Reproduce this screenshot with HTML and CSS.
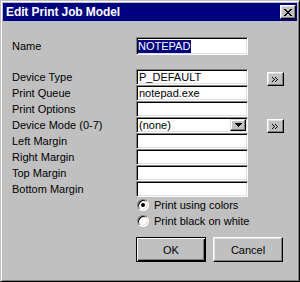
FILE: index.html
```html
<!DOCTYPE html>
<html>
<head>
<meta charset="utf-8">
<link rel="stylesheet" href="styles.css">
</head>
<body>
<div class="window">
  <div class="titlebar">
    <span class="title">Edit Print Job Model</span>
    <span class="close"><svg width="8" height="7" viewBox="0 0 8 7"><path d="M0 0h2v1h1v1h2V1h1V0h2v1H7v1H6v1H5v1h1v1h1v1h1v1H6V6H5V5H3v1H2v1H0V6h1V5h1V4h1V3H2V2H1V1H0z" fill="#000"/></svg></span>
  </div>
  <div class="form">
    <div class="row name-row">
      <span class="lbl">Name</span>
      <span class="field name-field"><span class="sel">NOTEPAD</span></span>
    </div>
    <div class="row">
      <span class="lbl">Device Type</span>
      <span class="field">P_DEFAULT</span>
      <span class="more more-a"><svg width="6" height="5" viewBox="0 0 6 5"><path d="M0 0h1v1h1v1h1v1H2v1H1v1H0V4h1V3h1V2H1V1H0zM3 0h1v1h1v1h1v1H5v1H4v1H3V4h1V3h1V2H4V1H3z" fill="#000"/></svg></span>
    </div>
    <div class="row">
      <span class="lbl">Print Queue</span>
      <span class="field">notepad.exe</span>
    </div>
    <div class="row">
      <span class="lbl">Print Options</span>
      <span class="field"></span>
    </div>
    <div class="row">
      <span class="lbl">Device Mode (0-7)</span>
      <span class="field combo"><span class="combo-text">(none)</span><span class="ddbtn"><svg width="7" height="4" viewBox="0 0 7 4"><path d="M0 0h7v1H6v1H5v1H4v1H3V3H2V2H1V1H0z" fill="#000"/></svg></span></span>
      <span class="more more-b"><svg width="6" height="5" viewBox="0 0 6 5"><path d="M0 0h1v1h1v1h1v1H2v1H1v1H0V4h1V3h1V2H1V1H0zM3 0h1v1h1v1h1v1H5v1H4v1H3V4h1V3h1V2H4V1H3z" fill="#000"/></svg></span>
    </div>
    <div class="row">
      <span class="lbl">Left Margin</span>
      <span class="field"></span>
    </div>
    <div class="row">
      <span class="lbl">Right Margin</span>
      <span class="field"></span>
    </div>
    <div class="row">
      <span class="lbl">Top Margin</span>
      <span class="field"></span>
    </div>
    <div class="row">
      <span class="lbl">Bottom Margin</span>
      <span class="field"></span>
    </div>
    <div class="row radio-row">
      <span class="lbl"></span>
      <span class="radio on"></span><span class="rtext">Print using colors</span>
    </div>
    <div class="row radio-row">
      <span class="lbl"></span>
      <span class="radio"></span><span class="rtext">Print black on white</span>
    </div>
    <div class="row btn-row">
      <span class="lbl"></span>
      <span class="btn default">OK</span>
      <span class="btn">Cancel</span>
    </div>
  </div>
</div>
</body>
</html>
```
FILE: styles.css
```css
* { box-sizing: border-box; margin: 0; padding: 0; }
html, body { width: 300px; height: 282px; overflow: hidden; background: #c0c0c0; }
body { font-family: "Liberation Sans", Arial, sans-serif; font-size: 11px; color: #000; }

.window {
  width: 300px; height: 282px;
  background: #c0c0c0;
  border: 1px solid; border-color: #c0c0c0 #000 #000 #c0c0c0;
  box-shadow: inset 1px 1px #fff, inset -1px -1px #808080;
  padding: 2px;
  display: flex; flex-direction: column;
}

.titlebar {
  height: 18px; background: #000080;
  display: flex; align-items: center; justify-content: space-between;
  padding: 0 1px 0 3px;
}
.title { color: #fff; font-weight: bold; font-size: 12px; letter-spacing: -0.1px; }
.close {
  width: 16px; height: 14px; background: #c0c0c0;
  border: 1px solid; border-color: #fff #000 #000 #fff;
  box-shadow: inset -1px -1px #808080, inset 1px 1px #dfdfdf;
  display: flex; align-items: center; justify-content: center;
}
.close svg { display: block; margin-left: -1px; }

.form { padding: 16px 0 0 9px; display: flex; flex-direction: column; }
.row { display: flex; align-items: center; height: 16px; }
.name-row { height: 18px; margin-bottom: 14px; }
.lbl { width: 124px; flex: none; }

.field {
  width: 112px; height: 16px; flex: none;
  background: #fff;
  border: 1px solid; border-color: #808080 #fff #fff #808080;
  box-shadow: inset 1px 1px #000, inset -1px -1px #dfdfdf;
  padding: 0 0 0 2px; line-height: 14px; white-space: nowrap;
}
.name-field { height: 18px; padding: 2px 0 0 1px; line-height: 13px; }
.sel { background: #000080; color: #fff; display: inline-block; height: 13px; padding-right: 1px; }

.combo { display: flex; align-items: center; padding: 0 1px 0 2px; }
.combo-text { flex: 1; }
.ddbtn {
  width: 16px; height: 12px; background: #c0c0c0;
  border: 1px solid; border-color: #dfdfdf #000 #000 #dfdfdf;
  box-shadow: inset -1px -1px #808080, inset 1px 1px #fff;
  display: flex; align-items: center; justify-content: center;
}
.ddbtn svg { display: block; }

.more {
  width: 17px; height: 14px; margin-left: 19px; flex: none;
  background: #c0c0c0;
  border: 1px solid; border-color: #fff #000 #000 #fff;
  box-shadow: inset -1px -1px #808080, inset 1px 1px #dfdfdf;
  display: flex; align-items: center; justify-content: center;
  align-self: flex-start;
}
.more svg { display: block; margin-left: -1px; }
.more-a { margin-top: 3px; }
.more-b { margin-top: 2px; }

.radio-row { height: 16px; }
.radio {
  width: 12px; height: 12px; margin-left: 1px; flex: none;
  border-radius: 50%; background: #fff;
  border: 1px solid; border-color: #808080 #fff #fff #808080;
  box-shadow: inset 1px 1px #000, inset -1px -1px #dfdfdf;
  position: relative;
}
.radio.on::after {
  content: ""; position: absolute; left: 3px; top: 3px;
  width: 4px; height: 4px; border-radius: 50%; background: #000;
}
.rtext { margin-left: 5px; }

.btn-row { height: 25px; margin-top: 8px; }
.btn {
  width: 70px; height: 25px; flex: none;
  background: #c0c0c0;
  border: 1px solid; border-color: #fff #000 #000 #fff;
  box-shadow: inset -1px -1px #808080, inset 1px 1px #dfdfdf;
  display: flex; align-items: center; justify-content: center;
}
.btn.default {
  border-color: #000;
  box-shadow: inset 1px 1px #fff, inset -1px -1px #000, inset -2px -2px #808080;
  margin-right: 7px;
}
```
